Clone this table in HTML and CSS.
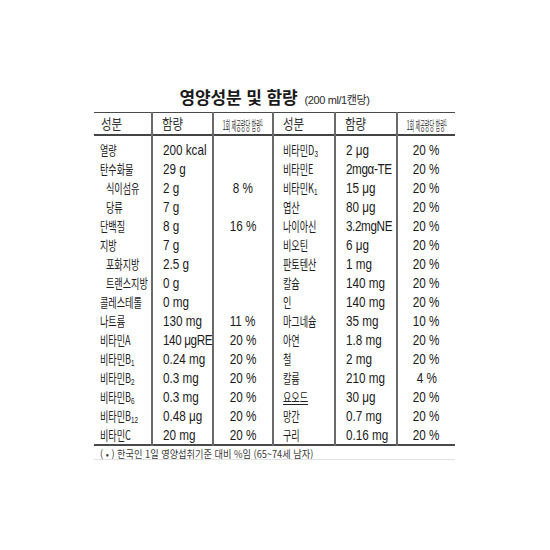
FILE: index.html
```html
<!DOCTYPE html>
<html lang="ko">
<head>
<meta charset="utf-8">
<title>영양성분 및 함량</title>
<link rel="stylesheet" href="styles.css">
</head>
<body>
<div class="sheet">
  <h1 class="title"><span class="title-main">영양성분 및 함량</span><span class="title-sub">(200 ml/1캔당)</span></h1>
  <table class="nutri">
    <colgroup>
      <col class="c1"><col class="c2"><col class="c3"><col class="c4"><col class="c5"><col class="c6">
    </colgroup>
    <thead>
      <tr>
        <th class="h-name"><span class="hk">성분</span></th>
        <th class="h-amt"><span class="hk">함량</span></th>
        <th class="h-pct"><div class="hp"><span class="hs">1회 제공량당 함량<sup>1</sup></span></div></th>
        <th class="h-name2"><span class="hk">성분</span></th>
        <th class="h-amt"><span class="hk">함량</span></th>
        <th class="h-pct"><div class="hp"><span class="hs">1회 제공량당 함량<sup>1</sup></span></div></th>
      </tr>
    </thead>
    <tbody>
      <tr class="first">
        <td class="name"><span class="k">열량</span></td><td class="amt"><span class="n">200 kcal</span></td><td class="pct"></td>
        <td class="name2"><span class="k">비타민D<sub>3</sub></span></td><td class="amt"><span class="n">2 μg</span></td><td class="pct"><span class="p">20 %</span></td>
      </tr>
      <tr>
        <td class="name"><span class="k">탄수화물</span></td><td class="amt"><span class="n">29 g</span></td><td class="pct"></td>
        <td class="name2"><span class="k">비타민E</span></td><td class="amt"><span class="n tight">2mgα-TE</span></td><td class="pct"><span class="p">20 %</span></td>
      </tr>
      <tr>
        <td class="name sub-item"><span class="k">식이섬유</span></td><td class="amt"><span class="n">2 g</span></td><td class="pct"><span class="p">8 %</span></td>
        <td class="name2"><span class="k">비타민K<sub>1</sub></span></td><td class="amt"><span class="n">15 μg</span></td><td class="pct"><span class="p">20 %</span></td>
      </tr>
      <tr>
        <td class="name sub-item"><span class="k">당류</span></td><td class="amt"><span class="n">7 g</span></td><td class="pct"></td>
        <td class="name2"><span class="k">엽산</span></td><td class="amt"><span class="n">80 μg</span></td><td class="pct"><span class="p">20 %</span></td>
      </tr>
      <tr>
        <td class="name"><span class="k">단백질</span></td><td class="amt"><span class="n">8 g</span></td><td class="pct"><span class="p">16 %</span></td>
        <td class="name2"><span class="k">나이아신</span></td><td class="amt"><span class="n tight">3.2mgNE</span></td><td class="pct"><span class="p">20 %</span></td>
      </tr>
      <tr>
        <td class="name"><span class="k">지방</span></td><td class="amt"><span class="n">7 g</span></td><td class="pct"></td>
        <td class="name2"><span class="k">비오틴</span></td><td class="amt"><span class="n">6 μg</span></td><td class="pct"><span class="p">20 %</span></td>
      </tr>
      <tr>
        <td class="name sub-item"><span class="k">포화지방</span></td><td class="amt"><span class="n">2.5 g</span></td><td class="pct"></td>
        <td class="name2"><span class="k">판토텐산</span></td><td class="amt"><span class="n">1 mg</span></td><td class="pct"><span class="p">20 %</span></td>
      </tr>
      <tr>
        <td class="name sub-item"><span class="k">트랜스지방</span></td><td class="amt"><span class="n">0 g</span></td><td class="pct"></td>
        <td class="name2"><span class="k">칼슘</span></td><td class="amt"><span class="n">140 mg</span></td><td class="pct"><span class="p">20 %</span></td>
      </tr>
      <tr>
        <td class="name"><span class="k">콜레스테롤</span></td><td class="amt"><span class="n">0 mg</span></td><td class="pct"></td>
        <td class="name2"><span class="k">인</span></td><td class="amt"><span class="n">140 mg</span></td><td class="pct"><span class="p">20 %</span></td>
      </tr>
      <tr>
        <td class="name"><span class="k">나트륨</span></td><td class="amt"><span class="n">130 mg</span></td><td class="pct"><span class="p">11 %</span></td>
        <td class="name2"><span class="k">마그네슘</span></td><td class="amt"><span class="n">35 mg</span></td><td class="pct"><span class="p">10 %</span></td>
      </tr>
      <tr>
        <td class="name"><span class="k">비타민A</span></td><td class="amt"><span class="n tight">140 μgRE</span></td><td class="pct"><span class="p">20 %</span></td>
        <td class="name2"><span class="k">아연</span></td><td class="amt"><span class="n">1.8 mg</span></td><td class="pct"><span class="p">20 %</span></td>
      </tr>
      <tr>
        <td class="name"><span class="k">비타민B<sub>1</sub></span></td><td class="amt"><span class="n">0.24 mg</span></td><td class="pct"><span class="p">20 %</span></td>
        <td class="name2"><span class="k">철</span></td><td class="amt"><span class="n">2 mg</span></td><td class="pct"><span class="p">20 %</span></td>
      </tr>
      <tr>
        <td class="name"><span class="k">비타민B<sub>2</sub></span></td><td class="amt"><span class="n">0.3 mg</span></td><td class="pct"><span class="p">20 %</span></td>
        <td class="name2"><span class="k">칼륨</span></td><td class="amt"><span class="n">210 mg</span></td><td class="pct"><span class="p">4 %</span></td>
      </tr>
      <tr>
        <td class="name"><span class="k">비타민B<sub>6</sub></span></td><td class="amt"><span class="n">0.3 mg</span></td><td class="pct"><span class="p">20 %</span></td>
        <td class="name2"><span class="k ul">요오드</span></td><td class="amt"><span class="n">30 μg</span></td><td class="pct"><span class="p">20 %</span></td>
      </tr>
      <tr>
        <td class="name"><span class="k">비타민B<sub>12</sub></span></td><td class="amt"><span class="n">0.48 μg</span></td><td class="pct"><span class="p">20 %</span></td>
        <td class="name2"><span class="k">망간</span></td><td class="amt"><span class="n">0.7 mg</span></td><td class="pct"><span class="p">20 %</span></td>
      </tr>
      <tr class="last">
        <td class="name"><span class="k">비타민C</span></td><td class="amt"><span class="n">20 mg</span></td><td class="pct"><span class="p">20 %</span></td>
        <td class="name2"><span class="k">구리</span></td><td class="amt"><span class="n">0.16 mg</span></td><td class="pct"><span class="p">20 %</span></td>
      </tr>
    </tbody>
  </table>
  <p class="note"><span class="note-text">( • ) 한국인 1일 영양섭취기준 대비 %임 (65~74세 남자)</span></p>
</div>
</body>
</html>
```
FILE: styles.css
```css
html, body {
  margin: 0;
  padding: 0;
  background: #ffffff;
}

body {
  font-family: "Liberation Sans", "Noto Sans CJK KR", sans-serif;
  color: #1c1c1c;
}

.sheet {
  width: 361px;
  margin: 0 0 0 94px;
  padding-top: 87px;
}

.title {
  margin: 0 0 5px 0;
  height: 20px;
  line-height: 20px;
  font-weight: normal;
  display: flex;
  justify-content: center;
  align-items: baseline;
  gap: 7px;
}

.title-main {
  font-family: "Noto Sans CJK KR", sans-serif;
  font-weight: 700;
  font-size: 17px;
  letter-spacing: -0.1px;
  color: #1a1a1a;
}

.title-sub {
  font-family: "Liberation Sans", "Noto Sans CJK KR", sans-serif;
  font-size: 11px;
  color: #2a2a2a;
  letter-spacing: -0.4px;
}

.nutri {
  width: 361px;
  border-collapse: collapse;
  table-layout: fixed;
}

.c1 { width: 58px; }
.c2 { width: 61px; }
.c3 { width: 60px; }
.c4 { width: 62px; }
.c5 { width: 62px; }
.c6 { width: 58px; }

.nutri th,
.nutri td {
  padding: 0;
  white-space: nowrap;
  overflow: visible;
}

.nutri th + th,
.nutri td + td {
  border-left: 2px solid #6a6a6a;
}

.nutri thead tr {
  border-top: 1px solid #4a4a4a;
  border-bottom: 2px solid #444444;
}

.nutri th {
  height: 20px;
  font-weight: normal;
  text-align: left;
  vertical-align: middle;
  line-height: 20px;
}

.nutri th.h-name { padding-left: 7px; }
.nutri th.h-amt { padding-left: 9px; }
.nutri th.h-name2 { padding-left: 9px; }

.hp {
  display: flex;
  justify-content: center;
  width: 100%;
}

.hk {
  display: inline-block;
  font-family: "Noto Sans CJK KR", sans-serif;
  font-size: 14px;
  color: #333333;
  transform: scaleX(0.82);
  transform-origin: left center;
}

.hs {
  flex: none;
  display: inline-block;
  font-family: "Noto Sans CJK KR", sans-serif;
  font-size: 11px;
  color: #333333;
  transform: scaleX(0.46) scaleY(1.15);
  transform-origin: center center;
}

.hs sup {
  font-size: 8px;
  vertical-align: 3px;
  line-height: 0;
}

.nutri tbody tr {
  height: 19px;
}

.nutri tbody tr.first td {
  padding-top: 4px;
}

.nutri tbody tr.last {
  border-bottom: 2px solid #4a4a4a;
}

.nutri td {
  line-height: 19px;
  vertical-align: top;
  font-size: 15px;
}

.nutri td.name { padding-left: 6px; }
.nutri td.name.sub-item { padding-left: 12px; }
.nutri td.name2 { padding-left: 9px; }
.nutri td.amt { padding-left: 10px; }
.nutri td.pct { text-align: center; }

.k {
  display: inline-block;
  font-family: "Noto Sans CJK KR", sans-serif;
  font-size: 13px;
  color: #222222;
  transform: scaleX(0.7);
  transform-origin: left center;
}

.k sub {
  font-family: "Liberation Sans", sans-serif;
  font-size: 9px;
  vertical-align: -2px;
  line-height: 0;
}

.k.ul {
  text-decoration: underline;
  text-underline-offset: 2px;
}

.n {
  display: inline-block;
  font-family: "Liberation Sans", "Noto Sans CJK KR", sans-serif;
  font-size: 15px;
  color: #1a1a1a;
  transform: scaleX(0.78);
  transform-origin: left center;
}

.n.tight {
  letter-spacing: -0.5px;
}

.p {
  display: inline-block;
  font-family: "Liberation Sans", sans-serif;
  font-size: 15px;
  color: #1a1a1a;
  transform: scaleX(0.78);
  transform-origin: center center;
}

.note {
  margin: 0;
  padding-left: 6px;
  height: 13px;
  line-height: 13px;
  border-bottom: 1px solid #e2e2e2;
}

.note-text {
  display: inline-block;
  font-family: "Noto Sans CJK KR", sans-serif;
  font-size: 10px;
  color: #3a3a3a;
  transform: scaleX(0.92);
  transform-origin: left center;
}
```
